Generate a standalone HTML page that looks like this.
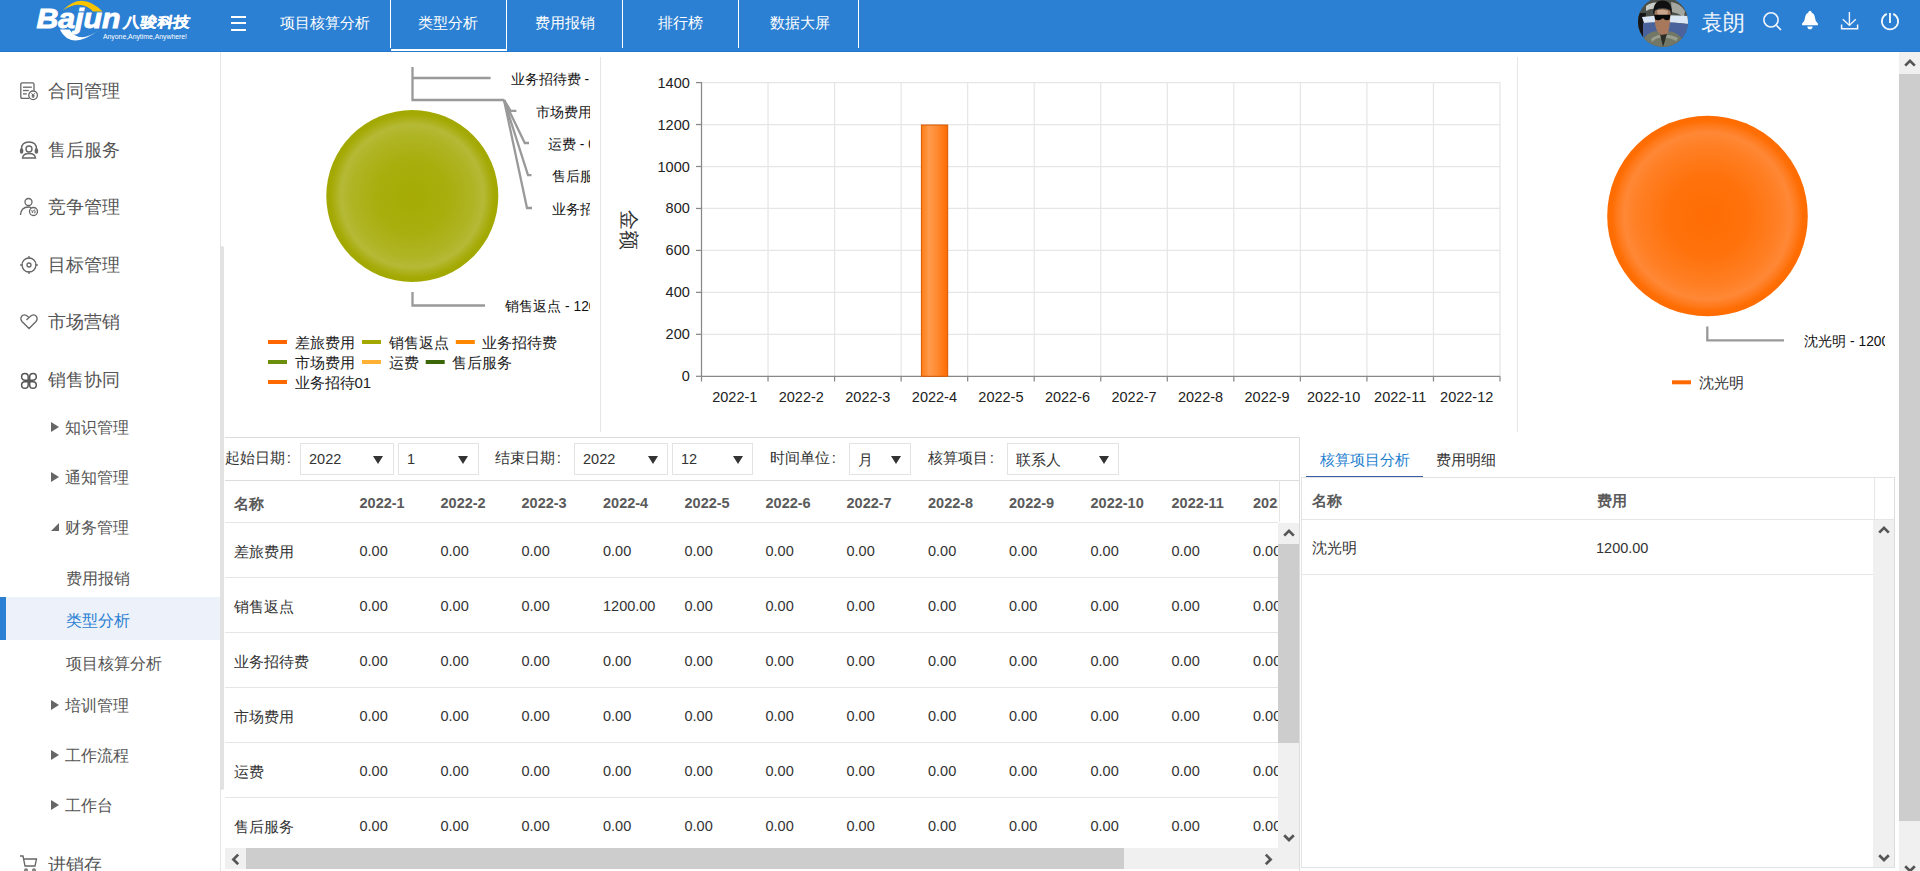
<!DOCTYPE html>
<html><head><meta charset="utf-8">
<style>
*{box-sizing:border-box;margin:0;padding:0}
html,body{width:1920px;height:871px;overflow:hidden;background:#fff}
body{position:relative;font-family:"Liberation Sans",sans-serif;color:#333}
.a{position:absolute}
.t{position:absolute;white-space:nowrap;line-height:1}
#hdr{left:0;top:0;width:1920px;height:52px;background:#2c80d3;border-bottom:1px solid #1f77cf}
.nav{color:#fff;font-size:15px;top:15px}
.sep{background:#fff;width:1px;top:0;height:48px}
.side1{font-size:18px;color:#555}
.side2{font-size:16.3px;color:#555}
.tri{width:0;height:0;border-top:5px solid transparent;border-bottom:5px solid transparent;border-left:8px solid #666}
.lbl{font-size:15px;color:#333}
.sel{border:1px solid #e3e3e3;height:32px;top:443px;background:#fff}
.sel .v{position:absolute;left:8px;top:8px;font-size:14.5px;line-height:1;color:#333;white-space:nowrap}
.sel .ar{position:absolute;top:11.5px;width:0;height:0;border-left:5px solid transparent;border-right:5px solid transparent;border-top:8.5px solid #333}
.hline{height:1px;background:#e6e6e6}
.th{font-size:14px;font-weight:bold;color:#5a5a5a}
.td{font-size:14px;color:#333}
</style></head><body>

<!-- HEADER -->
<div id="hdr" class="a">
  <svg class="a" style="left:0;top:0" width="200" height="52" viewBox="0 0 200 52">
    <path d="M62.5 10.6 Q82 -9.5 102.6 11.6 L93 11.6 Q81 -1.5 62.5 10.6 Z" fill="#f8c400"/>
    <text x="36.5" y="27.6" font-family="Liberation Sans" font-weight="bold" font-style="italic" font-size="27.5" fill="#fff" stroke="#fff" stroke-width="0.9" textLength="84" lengthAdjust="spacingAndGlyphs">Bajun</text>
    <path d="M59.8 29.6 Q71 51.5 99.8 29.6 Q79 45 69.5 29.6 Z" fill="#fff"/>
    <text transform="translate(123,26.6) skewX(-9)" x="0" y="0" font-family="Liberation Sans" font-weight="bold" font-size="14.5" fill="#fff" stroke="#fff" stroke-width="0.3" textLength="67" lengthAdjust="spacingAndGlyphs">八骏科技</text>
    <text x="103" y="39" font-family="Liberation Sans" font-size="6.9" fill="#fff" textLength="84" lengthAdjust="spacingAndGlyphs">Anyone,Anytime,Anywhere!</text>
  </svg>
  <div class="a" style="left:231px;top:16px;width:15px;height:2px;background:#fff"></div>
  <div class="a" style="left:231px;top:22px;width:15px;height:2px;background:#fff"></div>
  <div class="a" style="left:231px;top:29px;width:15px;height:2px;background:#fff"></div>

  <div class="t nav" style="left:280px">项目核算分析</div>
  <div class="a" style="left:390px;top:0;width:1px;height:48px;background:#fff"></div>
  <div class="a" style="left:391px;top:49px;width:116px;height:2px;background:#fff"></div>
  <div class="a sep" style="left:506px;height:50px"></div>
  <div class="t nav" style="left:418px">类型分析</div>
  <div class="t nav" style="left:535px">费用报销</div>
  <div class="a sep" style="left:622px"></div>
  <div class="t nav" style="left:658px">排行榜</div>
  <div class="a sep" style="left:738px"></div>
  <div class="t nav" style="left:770px">数据大屏</div>
  <div class="a sep" style="left:858px"></div>

  <!-- avatar -->
  <svg class="a" style="left:1638px;top:-3px" width="50" height="50" viewBox="0 0 50 50">
    <defs><clipPath id="cp"><circle cx="25" cy="25" r="25"/></clipPath></defs>
    <g clip-path="url(#cp)">
      <rect width="50" height="50" fill="#585c55"/>
      <path d="M0 0 H50 V22 H0Z" fill="#4b4f49"/>
      <path d="M8 9 Q14 4 22 6 L20 12 Q12 11 8 14Z" fill="#c9cbc6"/>
      <path d="M33 5 Q42 6 47 14 L46 20 Q40 16 34 15Z" fill="#a4a7a0"/>
      <path d="M0 16 H8 L6 40 H0Z" fill="#151515"/>
      <path d="M4 20 Q25 17 50 19 L50 27 Q30 24 6 26Z" fill="#dbe6f4"/>
      <path d="M5 26 Q30 24 50 27 L50 40 L5 40Z" fill="#4a639c"/>
      <path d="M3 50 Q5 38 14 35 Q24 32 35 35 Q44 38 48 50Z" fill="#737866"/>
      <path d="M13 42 Q20 37 25 38 Q31 37 40 41 L38 44 Q30 40 25 41 Q19 40 14 45Z" fill="#9a9e8e"/>
      <path d="M22 37 L25 50 L29 37Z" fill="#2a2c26"/>
      <path d="M17 14 Q16 31 20 35 L23 38 L29 37 Q32 33 32.5 14 Q25 10 17 14Z" fill="#a8785c"/>
      <path d="M19 13 Q25 12 30 14 L29 19 Q25 17 20 19Z" fill="#c9a58e"/>
      <path d="M15.5 18 Q14 4 24.5 3.5 Q35 4 33.5 18 L32 13 Q25 9 17 13Z" fill="#101010"/>
      <path d="M16 17.8 H32.5 L31.5 22.5 Q28 24.5 25 21.2 Q21 24.5 17.2 22.5Z" fill="#080808"/>
    </g>
  </svg>
  <div class="t" style="left:1701px;top:12.2px;font-size:22px;color:#f0f5fc">袁朗</div>
  <!-- icons -->
  <svg class="a" style="left:1755px;top:0" width="165" height="45" viewBox="0 0 165 45">
    <g fill="none" stroke="#f2f6fc" stroke-width="1.6">
      <circle cx="16" cy="19.9" r="7.1"/>
      <line x1="21.3" y1="25.3" x2="26" y2="30"/>
      <line x1="94.4" y1="12" x2="94.4" y2="25" stroke-width="1.4"/>
      <polyline points="87.8,19.2 94.4,25.4 100.8,19.2" stroke-width="1.4"/>
      <polyline points="86.6,24.5 86.6,28.8 102.6,28.8 102.6,24.5" stroke-width="1.5"/>
      <path d="M131.8 13.9 A8.1 8.1 0 1 0 138.2 13.9" stroke-width="1.8"/>
      <line x1="135" y1="13.1" x2="135" y2="22.9" stroke-width="1.9"/>
    </g>
    <path d="M55 10.8 Q56.4 10.8 56.8 12.7 Q59.6 13.9 59.9 17.6 Q60.2 21.6 62.9 23.6 L62.9 25.3 L47.1 25.3 L47.1 23.6 Q49.8 21.6 50.1 17.6 Q50.4 13.9 53.2 12.7 Q53.6 10.8 55 10.8 Z" fill="#fff"/>
    <path d="M52.4 26.4 H57.6 Q57.6 29.2 55 29.2 Q52.4 29.2 52.4 26.4 Z" fill="#fff"/>
  </svg>
</div>

<!-- SIDEBAR -->
<div class="a" style="left:220px;top:52px;width:1px;height:819px;background:#e6e6e6"></div>
<div class="a" style="left:219.5px;top:246px;width:4px;height:544px;background:#e2e2e2;border-radius:2px"></div>


<div id="sidebar">
  <!-- icons -->
  <svg class="a" style="left:19px;top:81px" width="20" height="20" viewBox="0 0 20 20" fill="none" stroke="#666" stroke-width="1.3">
    <path d="M10.2 17.3 H3.2 Q1.8 17.3 1.8 15.9 V3.2 Q1.8 1.8 3.2 1.8 H13.6 Q15 1.8 15 3.2 V9.6"/>
    <line x1="4" y1="6.2" x2="12.8" y2="6.2"/><line x1="4" y1="9.5" x2="9.8" y2="9.5"/><line x1="4" y1="12.9" x2="7.7" y2="12.9"/>
    <circle cx="14.1" cy="14.3" r="4.3"/>
    <path d="M12.5 12.2 L14.1 14.3 L15.7 12.2 M14.1 14.3 V16.9 M12.7 14.6 H15.5 M12.7 15.8 H15.5" stroke-width="1"/>
  </svg>
  <div class="t side1" style="left:47.5px;top:82px">合同管理</div>

  <svg class="a" style="left:19px;top:140px" width="20" height="20" viewBox="0 0 20 20" fill="none" stroke="#666" stroke-width="1.4">
    <path d="M2.5 11 V9 Q2.5 2 10 2 Q17.5 2 17.5 9 V11"/>
    <rect x="1.6" y="9" width="2" height="4" rx="1" fill="#666"/><rect x="16.4" y="9" width="2" height="4" rx="1" fill="#666"/>
    <circle cx="10" cy="9" r="3"/>
    <path d="M3.5 18 Q4 13.5 10 13.5 Q16 13.5 16.5 18 Z"/>
  </svg>
  <div class="t side1" style="left:47.5px;top:140.5px">售后服务</div>

  <svg class="a" style="left:19px;top:197px" width="20" height="20" viewBox="0 0 20 20" fill="none" stroke="#666" stroke-width="1.3">
    <circle cx="9.5" cy="5" r="3.5"/>
    <path d="M1.5 18 Q2 10 9.5 10 Q11 10 12 10.5"/>
    <circle cx="14.5" cy="14.5" r="4"/>
    <path d="M12.6 13 L13.5 16 L14.4 13 M15 15.8 Q16.5 16.3 16.5 15 Q16.5 14.2 15.6 14.2 Q14.8 14 15 13.3 Q15.5 12.6 16.4 13.2" stroke-width="0.8"/>
  </svg>
  <div class="t side1" style="left:47.5px;top:197.5px">竞争管理</div>

  <svg class="a" style="left:19px;top:255px" width="20" height="20" viewBox="0 0 20 20" fill="none" stroke="#666" stroke-width="1.3">
    <circle cx="10" cy="10" r="7"/>
    <circle cx="10" cy="10" r="2"/>
    <line x1="10" y1="1" x2="10" y2="4"/><line x1="10" y1="16" x2="10" y2="19"/>
    <line x1="1" y1="10" x2="4" y2="10"/><line x1="16" y1="10" x2="19" y2="10"/>
  </svg>
  <div class="t side1" style="left:47.5px;top:255.5px">目标管理</div>

  <svg class="a" style="left:19px;top:312px" width="20" height="20" viewBox="0 0 20 20" fill="none" stroke="#666" stroke-width="1.3">
    <path d="M10 16.5 L3 9.5 Q1 7 2.5 4.5 Q4.5 2 7.5 3.5 L10 5.5 L12.5 3.5 Q15.5 2 17.5 4.5 Q19 7 17 9.5 Z"/>
    <path d="M10 5.5 L7.5 8" />
  </svg>
  <div class="t side1" style="left:47.5px;top:313px">市场营销</div>

  <svg class="a" style="left:19px;top:370px" width="20" height="20" viewBox="0 0 20 20" fill="none" stroke="#555" stroke-width="1.5"><path d="M9.2 10.2 H5.8999999999999995 A3.3 3.3 0 1 1 9.2 6.8999999999999995 Z"/><path d="M10.7 10.2 V6.8999999999999995 A3.3 3.3 0 1 1 13.999999999999998 10.2 Z"/><path d="M9.2 11.7 V14.999999999999998 A3.3 3.3 0 1 1 5.8999999999999995 11.7 Z"/><path d="M10.7 11.7 H13.999999999999998 A3.3 3.3 0 1 1 10.7 14.999999999999998 Z"/></svg>
  <div class="t side1" style="left:47.5px;top:370.5px">销售协同</div>

  <div class="a tri" style="left:51px;top:422px"></div>
  <div class="t side2" style="left:65px;top:419px">知识管理</div>
  <div class="a tri" style="left:51px;top:472px"></div>
  <div class="t side2" style="left:65px;top:469px">通知管理</div>
  <div class="a" style="left:51px;top:523px;width:0;height:0;border-left:8px solid transparent;border-bottom:8px solid #666"></div>
  <div class="t side2" style="left:65px;top:519px">财务管理</div>

  <div class="t side2" style="left:66px;top:569.5px">费用报销</div>
  <div class="a" style="left:0;top:597px;width:220px;height:43px;background:#edf2fa"></div>
  <div class="a" style="left:0;top:597px;width:6px;height:43px;background:#2c80d3"></div>
  <div class="t side2" style="left:66px;top:611.5px;color:#2c7fd3">类型分析</div>
  <div class="t side2" style="left:66px;top:654.5px">项目核算分析</div>

  <div class="a tri" style="left:51px;top:699.5px"></div>
  <div class="t side2" style="left:65px;top:696.5px">培训管理</div>
  <div class="a tri" style="left:51px;top:750px"></div>
  <div class="t side2" style="left:65px;top:747px">工作流程</div>
  <div class="a tri" style="left:51px;top:800px"></div>
  <div class="t side2" style="left:65px;top:796.5px">工作台</div>

  <svg class="a" style="left:19px;top:853px" width="20" height="20" viewBox="0 0 20 20" fill="none" stroke="#666" stroke-width="1.3">
    <path d="M1 3 H4 L6 13 H16 L17.5 6 H5"/>
    <circle cx="7" cy="17" r="1.2"/><circle cx="15" cy="17" r="1.2"/>
  </svg>
  <div class="t side1" style="left:48px;top:855.5px">进销存</div>
</div>


<!-- MAIN -->
<div id="main">
<svg class="a" style="left:0;top:0" width="1920" height="440" viewBox="0 0 1920 440">
<defs>
<radialGradient id="gOl" cx="412.3" cy="196" r="86" gradientUnits="userSpaceOnUse">
 <stop offset="0" stop-color="#a5ab04"/><stop offset="0.4" stop-color="#a8ae0c"/><stop offset="0.7" stop-color="#afb424"/><stop offset="0.83" stop-color="#b5b936"/><stop offset="0.9" stop-color="#abb018"/><stop offset="0.95" stop-color="#a4aa04"/><stop offset="1" stop-color="#a2a800"/>
</radialGradient>
<radialGradient id="gOr" cx="1707.5" cy="216" r="100.3" gradientUnits="userSpaceOnUse">
 <stop offset="0" stop-color="#ff6d04"/><stop offset="0.4" stop-color="#ff720c"/><stop offset="0.7" stop-color="#ff7f24"/><stop offset="0.83" stop-color="#ff8836"/><stop offset="0.9" stop-color="#ff7a1c"/><stop offset="0.95" stop-color="#ff6e04"/><stop offset="1" stop-color="#ff6c00"/>
</radialGradient>
<linearGradient id="gBar" x1="0" y1="0" x2="1" y2="0">
 <stop offset="0" stop-color="#ff7d12"/><stop offset="0.3" stop-color="#ff9a4c"/><stop offset="0.6" stop-color="#ff8a30"/><stop offset="1" stop-color="#ff6a00"/>
</linearGradient>
<clipPath id="clipL"><rect x="221" y="52" width="369" height="390"/></clipPath>
<clipPath id="clipR"><rect x="1518" y="52" width="367" height="390"/></clipPath>
</defs>
<rect x="600" y="57" width="1" height="375" fill="#e6e6e6"/>
<rect x="1517" y="57" width="1" height="375" fill="#e6e6e6"/>
<circle cx="412.3" cy="196" r="86" fill="url(#gOl)"/>
<g fill="none" stroke="#999" stroke-width="2.3">
<polyline points="412.5,67 412.5,100 504,100"/>
<polyline points="412.5,78 490.6,78"/>
<polyline points="504,100 510.6,110.8 516.4,110.8"/>
<polyline points="504,100 524.8,143 529,143"/>
<polyline points="504,100 528,175.2 531.5,175.2"/>
<polyline points="504,100 527,208 532,208"/>
<polyline points="412.5,292 412.5,305.5 485,305.5"/>
</g>
<g clip-path="url(#clipL)" font-family="Liberation Sans" font-size="13.75" fill="#111">
<text x="510.6" y="84">业务招待费 - 0</text>
<text x="536.4" y="116.5">市场费用 - 0</text>
<text x="548" y="149">运费 - 0</text>
<text x="552" y="181">售后服务 - 0</text>
<text x="552.2" y="213.5">业务招待01 - 0</text>
<text x="505.3" y="311">销售返点 - 1200</text>
</g>
<g font-family="Liberation Sans" font-size="15" fill="#222">
<rect x="268" y="340" width="19" height="4" fill="#ff6600"/>
<text x="294.5" y="347.5">差旅费用</text>
<rect x="362" y="340" width="19" height="4" fill="#a3a800"/>
<text x="388.5" y="347.5">销售返点</text>
<rect x="455.8" y="340" width="19" height="4" fill="#ff8800"/>
<text x="482.3" y="347.5">业务招待费</text>
<rect x="268" y="360" width="19" height="4" fill="#6b8e0c"/>
<text x="294.5" y="367.5">市场费用</text>
<rect x="362" y="360" width="19" height="4" fill="#ffb136"/>
<text x="388.5" y="367.5">运费</text>
<rect x="425.7" y="360" width="19" height="4" fill="#3a6608"/>
<text x="452.2" y="367.5">售后服务</text>
<rect x="268" y="380" width="19" height="4" fill="#ff6a00"/>
<text x="294.5" y="387.5">业务招待01</text>
</g>
<g stroke="#e6e6e6" stroke-width="1.25" fill="none">
<line x1="701.5" y1="334.34" x2="1500" y2="334.34"/>
<line x1="701.5" y1="292.38" x2="1500" y2="292.38"/>
<line x1="701.5" y1="250.42" x2="1500" y2="250.42"/>
<line x1="701.5" y1="208.46" x2="1500" y2="208.46"/>
<line x1="701.5" y1="166.50" x2="1500" y2="166.50"/>
<line x1="701.5" y1="124.54" x2="1500" y2="124.54"/>
<line x1="701.5" y1="82.58" x2="1500" y2="82.58"/>
<line x1="768.04" y1="82.6" x2="768.04" y2="376.3"/>
<line x1="834.58" y1="82.6" x2="834.58" y2="376.3"/>
<line x1="901.12" y1="82.6" x2="901.12" y2="376.3"/>
<line x1="967.67" y1="82.6" x2="967.67" y2="376.3"/>
<line x1="1034.21" y1="82.6" x2="1034.21" y2="376.3"/>
<line x1="1100.75" y1="82.6" x2="1100.75" y2="376.3"/>
<line x1="1167.29" y1="82.6" x2="1167.29" y2="376.3"/>
<line x1="1233.83" y1="82.6" x2="1233.83" y2="376.3"/>
<line x1="1300.38" y1="82.6" x2="1300.38" y2="376.3"/>
<line x1="1366.92" y1="82.6" x2="1366.92" y2="376.3"/>
<line x1="1433.46" y1="82.6" x2="1433.46" y2="376.3"/>
<line x1="1500.00" y1="82.6" x2="1500.00" y2="376.3"/>
</g>
<g stroke="#888" stroke-width="1.25" fill="none">
<line x1="701.5" y1="82" x2="701.5" y2="376.3"/>
<line x1="701.5" y1="376.3" x2="1500" y2="376.3"/>
<line x1="696" y1="376.30" x2="701.5" y2="376.30"/>
<line x1="696" y1="334.34" x2="701.5" y2="334.34"/>
<line x1="696" y1="292.38" x2="701.5" y2="292.38"/>
<line x1="696" y1="250.42" x2="701.5" y2="250.42"/>
<line x1="696" y1="208.46" x2="701.5" y2="208.46"/>
<line x1="696" y1="166.50" x2="701.5" y2="166.50"/>
<line x1="696" y1="124.54" x2="701.5" y2="124.54"/>
<line x1="696" y1="82.58" x2="701.5" y2="82.58"/>
<line x1="701.50" y1="376.3" x2="701.50" y2="381.5"/>
<line x1="768.04" y1="376.3" x2="768.04" y2="381.5"/>
<line x1="834.58" y1="376.3" x2="834.58" y2="381.5"/>
<line x1="901.12" y1="376.3" x2="901.12" y2="381.5"/>
<line x1="967.67" y1="376.3" x2="967.67" y2="381.5"/>
<line x1="1034.21" y1="376.3" x2="1034.21" y2="381.5"/>
<line x1="1100.75" y1="376.3" x2="1100.75" y2="381.5"/>
<line x1="1167.29" y1="376.3" x2="1167.29" y2="381.5"/>
<line x1="1233.83" y1="376.3" x2="1233.83" y2="381.5"/>
<line x1="1300.38" y1="376.3" x2="1300.38" y2="381.5"/>
<line x1="1366.92" y1="376.3" x2="1366.92" y2="381.5"/>
<line x1="1433.46" y1="376.3" x2="1433.46" y2="381.5"/>
<line x1="1500.00" y1="376.3" x2="1500.00" y2="381.5"/>
</g>
<g font-family="Liberation Sans" font-size="14.5" fill="#222" text-anchor="end">
<text x="689.8" y="381.30">0</text>
<text x="689.8" y="339.34">200</text>
<text x="689.8" y="297.38">400</text>
<text x="689.8" y="255.42">600</text>
<text x="689.8" y="213.46">800</text>
<text x="689.8" y="171.50">1000</text>
<text x="689.8" y="129.54">1200</text>
<text x="689.8" y="87.58">1400</text>
</g>
<g font-family="Liberation Sans" font-size="14.5" fill="#222" text-anchor="middle">
<text x="734.77" y="401.5">2022-1</text>
<text x="801.31" y="401.5">2022-2</text>
<text x="867.85" y="401.5">2022-3</text>
<text x="934.40" y="401.5">2022-4</text>
<text x="1000.94" y="401.5">2022-5</text>
<text x="1067.48" y="401.5">2022-6</text>
<text x="1134.02" y="401.5">2022-7</text>
<text x="1200.56" y="401.5">2022-8</text>
<text x="1267.10" y="401.5">2022-9</text>
<text x="1333.65" y="401.5">2022-10</text>
<text x="1400.19" y="401.5">2022-11</text>
<text x="1466.73" y="401.5">2022-12</text>
</g>
<rect x="921.4" y="125" width="26.3" height="251.3" fill="url(#gBar)" stroke="#d65800" stroke-width="1"/>
<text transform="translate(629,230) rotate(90)" font-family="Liberation Sans" font-size="20" fill="#333" text-anchor="middle" dominant-baseline="central" y="0" x="0">金额</text>
<circle cx="1707.5" cy="216" r="100.3" fill="url(#gOr)"/>
<polyline points="1707.3,326.5 1707.3,340.4 1784,340.4" fill="none" stroke="#999" stroke-width="2.3"/>
<g clip-path="url(#clipR)" font-family="Liberation Sans" font-size="13.75" fill="#111"><text x="1804.3" y="346.3">沈光明 - 1200</text></g>
<rect x="1672" y="380.3" width="19" height="4" fill="#ff6a00"/>
<text x="1698.5" y="387.8" font-family="Liberation Sans" font-size="15" fill="#333">沈光明</text>
</svg>
<div class="a hline" style="left:225px;top:437px;width:1075px;background:#dcdcdc"></div>
<div class="a" style="left:1299px;top:437px;width:1px;height:434px;background:#dcdcdc"></div>
<div class="a hline" style="left:225px;top:480px;width:1075px;background:#dcdcdc"></div>
<div class="t lbl" style="left:225px;top:450px;width:65px;overflow:hidden">起始日期<span style="margin-left:1.8px">:</span></div>
<div class="a sel" style="left:300px;width:94px"><div class="v">2022</div><div class="ar" style="left:71.5px"></div></div>
<div class="a sel" style="left:398px;width:81px"><div class="v">1</div><div class="ar" style="left:58.5px"></div></div>
<div class="t lbl" style="left:495px;top:450px">结束日期<span style="margin-left:1.8px">:</span></div>
<div class="a sel" style="left:574px;width:94px"><div class="v">2022</div><div class="ar" style="left:72.5px"></div></div>
<div class="a sel" style="left:672px;width:81px"><div class="v">12</div><div class="ar" style="left:59.5px"></div></div>
<div class="t lbl" style="left:770px;top:450px">时间单位<span style="margin-left:1.8px">:</span></div>
<div class="a sel" style="left:849px;width:62px"><div class="v" style="font-size:15px;top:7.5px">月</div><div class="ar" style="left:41px"></div></div>
<div class="t lbl" style="left:928px;top:450px">核算项目<span style="margin-left:1.8px">:</span></div>
<div class="a sel" style="left:1007px;width:112px"><div class="v" style="font-size:15px;top:7.5px">联系人</div><div class="ar" style="left:91px"></div></div>
<div class="a" style="left:225px;top:480px;width:1053px;height:368px;overflow:hidden">
<div class="t th" style="left:9px;top:16px;font-size:15px">名称</div>
<div class="t th" style="left:134.5px;top:16px;font-size:14.5px">2022-1</div>
<div class="t th" style="left:215.5px;top:16px;font-size:14.5px">2022-2</div>
<div class="t th" style="left:296.5px;top:16px;font-size:14.5px">2022-3</div>
<div class="t th" style="left:378px;top:16px;font-size:14.5px">2022-4</div>
<div class="t th" style="left:459.5px;top:16px;font-size:14.5px">2022-5</div>
<div class="t th" style="left:540.5px;top:16px;font-size:14.5px">2022-6</div>
<div class="t th" style="left:621.5px;top:16px;font-size:14.5px">2022-7</div>
<div class="t th" style="left:703px;top:16px;font-size:14.5px">2022-8</div>
<div class="t th" style="left:784px;top:16px;font-size:14.5px">2022-9</div>
<div class="t th" style="left:865.5px;top:16px;font-size:14.5px">2022-10</div>
<div class="t th" style="left:946.5px;top:16px;font-size:14.5px">2022-11</div>
<div class="t th" style="left:1028px;top:16px;font-size:14.5px">2022-12</div>
<div class="a hline" style="left:0;top:42px;width:1053px"></div>
<div class="t td" style="left:9px;top:63.5px;font-size:15px">差旅费用</div>
<div class="t td" style="left:134.5px;top:63.5px;font-size:14.5px">0.00</div>
<div class="t td" style="left:215.5px;top:63.5px;font-size:14.5px">0.00</div>
<div class="t td" style="left:296.5px;top:63.5px;font-size:14.5px">0.00</div>
<div class="t td" style="left:378px;top:63.5px;font-size:14.5px">0.00</div>
<div class="t td" style="left:459.5px;top:63.5px;font-size:14.5px">0.00</div>
<div class="t td" style="left:540.5px;top:63.5px;font-size:14.5px">0.00</div>
<div class="t td" style="left:621.5px;top:63.5px;font-size:14.5px">0.00</div>
<div class="t td" style="left:703px;top:63.5px;font-size:14.5px">0.00</div>
<div class="t td" style="left:784px;top:63.5px;font-size:14.5px">0.00</div>
<div class="t td" style="left:865.5px;top:63.5px;font-size:14.5px">0.00</div>
<div class="t td" style="left:946.5px;top:63.5px;font-size:14.5px">0.00</div>
<div class="t td" style="left:1028px;top:63.5px;font-size:14.5px">0.00</div>
<div class="a hline" style="left:0;top:97px;width:1053px"></div>
<div class="t td" style="left:9px;top:118.5px;font-size:15px">销售返点</div>
<div class="t td" style="left:134.5px;top:118.5px;font-size:14.5px">0.00</div>
<div class="t td" style="left:215.5px;top:118.5px;font-size:14.5px">0.00</div>
<div class="t td" style="left:296.5px;top:118.5px;font-size:14.5px">0.00</div>
<div class="t td" style="left:378px;top:118.5px;font-size:14.5px">1200.00</div>
<div class="t td" style="left:459.5px;top:118.5px;font-size:14.5px">0.00</div>
<div class="t td" style="left:540.5px;top:118.5px;font-size:14.5px">0.00</div>
<div class="t td" style="left:621.5px;top:118.5px;font-size:14.5px">0.00</div>
<div class="t td" style="left:703px;top:118.5px;font-size:14.5px">0.00</div>
<div class="t td" style="left:784px;top:118.5px;font-size:14.5px">0.00</div>
<div class="t td" style="left:865.5px;top:118.5px;font-size:14.5px">0.00</div>
<div class="t td" style="left:946.5px;top:118.5px;font-size:14.5px">0.00</div>
<div class="t td" style="left:1028px;top:118.5px;font-size:14.5px">0.00</div>
<div class="a hline" style="left:0;top:152px;width:1053px"></div>
<div class="t td" style="left:9px;top:173.5px;font-size:15px">业务招待费</div>
<div class="t td" style="left:134.5px;top:173.5px;font-size:14.5px">0.00</div>
<div class="t td" style="left:215.5px;top:173.5px;font-size:14.5px">0.00</div>
<div class="t td" style="left:296.5px;top:173.5px;font-size:14.5px">0.00</div>
<div class="t td" style="left:378px;top:173.5px;font-size:14.5px">0.00</div>
<div class="t td" style="left:459.5px;top:173.5px;font-size:14.5px">0.00</div>
<div class="t td" style="left:540.5px;top:173.5px;font-size:14.5px">0.00</div>
<div class="t td" style="left:621.5px;top:173.5px;font-size:14.5px">0.00</div>
<div class="t td" style="left:703px;top:173.5px;font-size:14.5px">0.00</div>
<div class="t td" style="left:784px;top:173.5px;font-size:14.5px">0.00</div>
<div class="t td" style="left:865.5px;top:173.5px;font-size:14.5px">0.00</div>
<div class="t td" style="left:946.5px;top:173.5px;font-size:14.5px">0.00</div>
<div class="t td" style="left:1028px;top:173.5px;font-size:14.5px">0.00</div>
<div class="a hline" style="left:0;top:207px;width:1053px"></div>
<div class="t td" style="left:9px;top:228.5px;font-size:15px">市场费用</div>
<div class="t td" style="left:134.5px;top:228.5px;font-size:14.5px">0.00</div>
<div class="t td" style="left:215.5px;top:228.5px;font-size:14.5px">0.00</div>
<div class="t td" style="left:296.5px;top:228.5px;font-size:14.5px">0.00</div>
<div class="t td" style="left:378px;top:228.5px;font-size:14.5px">0.00</div>
<div class="t td" style="left:459.5px;top:228.5px;font-size:14.5px">0.00</div>
<div class="t td" style="left:540.5px;top:228.5px;font-size:14.5px">0.00</div>
<div class="t td" style="left:621.5px;top:228.5px;font-size:14.5px">0.00</div>
<div class="t td" style="left:703px;top:228.5px;font-size:14.5px">0.00</div>
<div class="t td" style="left:784px;top:228.5px;font-size:14.5px">0.00</div>
<div class="t td" style="left:865.5px;top:228.5px;font-size:14.5px">0.00</div>
<div class="t td" style="left:946.5px;top:228.5px;font-size:14.5px">0.00</div>
<div class="t td" style="left:1028px;top:228.5px;font-size:14.5px">0.00</div>
<div class="a hline" style="left:0;top:262px;width:1053px"></div>
<div class="t td" style="left:9px;top:283.5px;font-size:15px">运费</div>
<div class="t td" style="left:134.5px;top:283.5px;font-size:14.5px">0.00</div>
<div class="t td" style="left:215.5px;top:283.5px;font-size:14.5px">0.00</div>
<div class="t td" style="left:296.5px;top:283.5px;font-size:14.5px">0.00</div>
<div class="t td" style="left:378px;top:283.5px;font-size:14.5px">0.00</div>
<div class="t td" style="left:459.5px;top:283.5px;font-size:14.5px">0.00</div>
<div class="t td" style="left:540.5px;top:283.5px;font-size:14.5px">0.00</div>
<div class="t td" style="left:621.5px;top:283.5px;font-size:14.5px">0.00</div>
<div class="t td" style="left:703px;top:283.5px;font-size:14.5px">0.00</div>
<div class="t td" style="left:784px;top:283.5px;font-size:14.5px">0.00</div>
<div class="t td" style="left:865.5px;top:283.5px;font-size:14.5px">0.00</div>
<div class="t td" style="left:946.5px;top:283.5px;font-size:14.5px">0.00</div>
<div class="t td" style="left:1028px;top:283.5px;font-size:14.5px">0.00</div>
<div class="a hline" style="left:0;top:317px;width:1053px"></div>
<div class="t td" style="left:9px;top:338.5px;font-size:15px">售后服务</div>
<div class="t td" style="left:134.5px;top:338.5px;font-size:14.5px">0.00</div>
<div class="t td" style="left:215.5px;top:338.5px;font-size:14.5px">0.00</div>
<div class="t td" style="left:296.5px;top:338.5px;font-size:14.5px">0.00</div>
<div class="t td" style="left:378px;top:338.5px;font-size:14.5px">0.00</div>
<div class="t td" style="left:459.5px;top:338.5px;font-size:14.5px">0.00</div>
<div class="t td" style="left:540.5px;top:338.5px;font-size:14.5px">0.00</div>
<div class="t td" style="left:621.5px;top:338.5px;font-size:14.5px">0.00</div>
<div class="t td" style="left:703px;top:338.5px;font-size:14.5px">0.00</div>
<div class="t td" style="left:784px;top:338.5px;font-size:14.5px">0.00</div>
<div class="t td" style="left:865.5px;top:338.5px;font-size:14.5px">0.00</div>
<div class="t td" style="left:946.5px;top:338.5px;font-size:14.5px">0.00</div>
<div class="t td" style="left:1028px;top:338.5px;font-size:14.5px">0.00</div>
<div class="a hline" style="left:0;top:372px;width:1053px"></div>
</div>
<div class="a" style="left:1279px;top:480px;width:1px;height:42px;background:#e6e6e6"></div>
<div class="a" style="left:1278px;top:522.5px;width:21px;height:346.5px;background:#f0f0f0"></div>
<div class="a" style="left:1278px;top:543.5px;width:21px;height:199px;background:#cdcdcd"></div>
<div class="a" style="left:225px;top:848px;width:1053px;height:21px;background:#f0f0f0"></div>
<div class="a" style="left:246px;top:848px;width:878px;height:21px;background:#cdcdcd"></div>
<svg class="a" style="left:1282.5px;top:526.5px" width="12" height="12" viewBox="0 0 12 12"><polyline points="1.2,8.6 6,3.8 10.8,8.6" transform="rotate(0 6 6.4)" fill="none" stroke="#555" stroke-width="2.7" stroke-linecap="butt" stroke-linejoin="miter"/></svg>
<svg class="a" style="left:1282.5px;top:831px" width="12" height="12" viewBox="0 0 12 12"><polyline points="1.2,8.6 6,3.8 10.8,8.6" transform="rotate(180 6 6.4)" fill="none" stroke="#555" stroke-width="2.7" stroke-linecap="butt" stroke-linejoin="miter"/></svg>
<svg class="a" style="left:229.5px;top:852.5px" width="12" height="12" viewBox="0 0 12 12"><polyline points="1.2,8.6 6,3.8 10.8,8.6" transform="rotate(-90 6 6.4)" fill="none" stroke="#555" stroke-width="2.7" stroke-linecap="butt" stroke-linejoin="miter"/></svg>
<svg class="a" style="left:1262px;top:852.5px" width="12" height="12" viewBox="0 0 12 12"><polyline points="1.2,8.6 6,3.8 10.8,8.6" transform="rotate(90 6 6.4)" fill="none" stroke="#555" stroke-width="2.7" stroke-linecap="butt" stroke-linejoin="miter"/></svg>
<div class="t" style="left:1320px;top:452px;font-size:15px;color:#1e7fd0">核算项目分析</div>
<div class="t" style="left:1436px;top:452px;font-size:15px;color:#333">费用明细</div>
<div class="a" style="left:1306px;top:475.5px;width:117px;height:2px;background:#3a5ba8"></div>
<div class="a" style="left:1301px;top:477px;width:594px;height:391px;border:1px solid #e3e3e3;border-right-color:#dcdcdc"></div>
<div class="a" style="left:1874px;top:477px;width:1px;height:43px;background:#e6e6e6"></div>
<div class="a hline" style="left:1302px;top:519px;width:592px"></div>
<div class="t th" style="left:1311.5px;top:493px;font-size:15px">名称</div>
<div class="t th" style="left:1597px;top:493px;font-size:15px">费用</div>
<div class="t td" style="left:1311.5px;top:540px;font-size:15px">沈光明</div>
<div class="t td" style="left:1596px;top:540.5px;font-size:14.5px">1200.00</div>
<div class="a hline" style="left:1302px;top:574px;width:571px"></div>
<div class="a" style="left:1873px;top:520px;width:21px;height:347px;background:#f0f0f0"></div>
<svg class="a" style="left:1877.5px;top:524px" width="12" height="12" viewBox="0 0 12 12"><polyline points="1.2,8.6 6,3.8 10.8,8.6" transform="rotate(0 6 6.4)" fill="none" stroke="#555" stroke-width="2.7" stroke-linecap="butt" stroke-linejoin="miter"/></svg>
<svg class="a" style="left:1877.5px;top:851px" width="12" height="12" viewBox="0 0 12 12"><polyline points="1.2,8.6 6,3.8 10.8,8.6" transform="rotate(180 6 6.4)" fill="none" stroke="#555" stroke-width="2.7" stroke-linecap="butt" stroke-linejoin="miter"/></svg>
<div class="a" style="left:1899px;top:52px;width:21px;height:819px;background:#f0f0f0"></div>
<div class="a" style="left:1899px;top:74px;width:21px;height:747px;background:#cdcdcd"></div>
<svg class="a" style="left:1903.5px;top:56.5px" width="12" height="12" viewBox="0 0 12 12"><polyline points="1.2,8.6 6,3.8 10.8,8.6" transform="rotate(0 6 6.4)" fill="none" stroke="#555" stroke-width="2.7" stroke-linecap="butt" stroke-linejoin="miter"/></svg>
<svg class="a" style="left:1903.5px;top:862px" width="12" height="12" viewBox="0 0 12 12"><polyline points="1.2,8.6 6,3.8 10.8,8.6" transform="rotate(180 6 6.4)" fill="none" stroke="#555" stroke-width="2.7" stroke-linecap="butt" stroke-linejoin="miter"/></svg>
</div>

</body></html>
